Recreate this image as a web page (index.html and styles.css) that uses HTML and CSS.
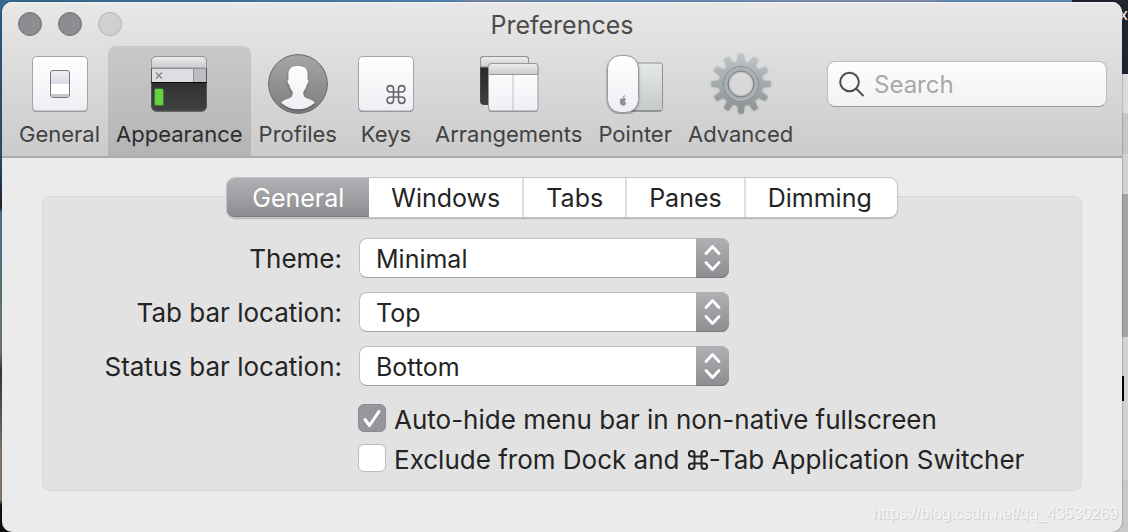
FILE: index.html
```html
<!DOCTYPE html>
<html lang="en">
<head>
<meta charset="utf-8">
<title>Preferences</title>
<link rel="stylesheet" href="styles.css">
</head>
<body>
<div class="backdrop" aria-hidden="true"><span class="backdrop-text">x</span><span class="backdrop-caret"></span></div>
<main class="window">
  <header class="header">
    <div class="titlebar">
      <div class="lights">
        <button class="light" aria-label="Close"></button>
        <button class="light" aria-label="Minimize"></button>
        <button class="light light-off" aria-label="Zoom" disabled></button>
      </div>
      <h1 class="title">Preferences</h1>
    </div>
    <div class="toolbar">
      <nav class="tools">
        <button class="tool">
          <svg class="icon" viewBox="0 0 60 60">
            <defs>
              <linearGradient id="plate" x2="0" y2="1"><stop stop-color="#fff"/><stop offset="1" stop-color="#eeeff4"/></linearGradient>
              <linearGradient id="rocker" x2="0" y2="1"><stop stop-color="#f0f1f4"/><stop offset=".48" stop-color="#d9dce4"/><stop offset=".5" stop-color="#fff"/><stop offset="1" stop-color="#fff"/></linearGradient>
              <linearGradient id="bar" x2="0" y2="1"><stop stop-color="#ededee"/><stop offset="1" stop-color="#cacbcd"/></linearGradient>
              <linearGradient id="dark" x2="0" y2="1"><stop stop-color="#222"/><stop offset="1" stop-color="#404040"/></linearGradient>
              <linearGradient id="disc" x2="0" y2="1"><stop stop-color="#a6a6a6"/><stop offset="1" stop-color="#7c7c7c"/></linearGradient>
              <linearGradient id="pad" x2="0" y2="1"><stop stop-color="#e4e8e9"/><stop offset="1" stop-color="#c4c9ca"/></linearGradient>
              <linearGradient id="steel" x2="0" y2="1"><stop stop-color="#bcc5c9"/><stop offset="1" stop-color="#8b8f91"/></linearGradient>
            </defs>
            <rect x="2.500" y="3.500" width="55" height="54.500" rx="4" fill="#8e8e90"/>
            <rect x="2.500" y="2.500" width="55" height="54.500" rx="4" fill="url(#plate)" stroke="#a3a3a6"/>
            <rect x="20.500" y="16.500" width="19" height="27" rx="2.500" fill="url(#rocker)" stroke="#77787c"/>
            <path d="M21 40h18v1.500q0 1.500-1.500 1.500h-15Q21 43 21 41.500z" fill="#c5c8c6"/>
          </svg>
          <span>General</span>
        </button>
        <button class="tool tool-active" aria-current="page">
          <svg class="icon" viewBox="0 0 60 60">
            <rect x="2.500" y="3" width="55" height="55" rx="5" fill="#777"/>
            <rect x="2.500" y="2.500" width="55" height="54.500" rx="5" fill="url(#dark)" stroke="#555"/>
            <path d="M2.500 14V7.500q0-5 5-5h45q5 0 5 5V14z" fill="url(#bar)" stroke="#96979a"/>
            <rect x="3" y="14" width="54" height="14" fill="#dddee1"/><rect x="44" y="14" width="13" height="14" fill="#bbbdc1"/>
            <path d="M3 14.500h54M44.500 15v13" stroke="#919296" fill="none"/>
            <path d="M7 18.500l6 6m0-6l-6 6" stroke="#828387" stroke-width="1.200"/>
            <path d="M2 28.500h56" stroke="#080808"/>
            <rect class="cursor" x="6" y="35" width="8" height="16" fill="#62d33f"/>
          </svg>
          <span>Appearance</span>
        </button>
        <button class="tool">
          <svg class="icon" viewBox="0 0 60 60">
            <circle cx="30" cy="30.500" r="29.500" fill="#ededed"/>
            <circle cx="30" cy="30" r="29.400" fill="url(#disc)" stroke="#686868"/>
            <path class="bust" d="M30 12c-7-.5-10 3.500-9.600 9.500v4c-1.400 0-.8 4.500 1 5.500.6 3.500 1.800 5 3.300 7-.2 3.500-.5 5-3 6-3.800 1.500-7 2.300-8.700 4.700C18 53 23.500 55.300 30 55.300S42 53 47 48.700c-1.700-2.400-5-3.200-8.700-4.700-2.500-1-2.800-2.500-3-6 1.500-2 2.700-3.500 3.300-7 1.800-1 2.400-5.500 1-5.500v-4C40 16 37.500 12.400 34 12.800 33 12 31.500 12 30 12z" fill="url(#plate)"/>
          </svg>
          <span>Profiles</span>
        </button>
        <button class="tool">
          <svg class="icon" viewBox="0 0 60 60">
            <rect x="2.500" y="3.500" width="55" height="54.500" rx="4" fill="#8e8e90"/>
            <rect x="2.500" y="2.500" width="55" height="54.500" rx="4" fill="url(#plate)" stroke="#a3a3a6"/>
            <path d="M37.500 38v-3.200a3.200 3.200 0 1 0-3.200 3.200h11.400a3.200 3.200 0 1 0-3.200-3.200v11.400a3.200 3.200 0 1 0 3.200-3.200H34.300a3.200 3.200 0 1 0 3.200 3.200z" fill="none" stroke="#66676a" stroke-width="1.600"/>
          </svg>
          <span>Keys</span>
        </button>
        <button class="tool">
          <svg class="icon" viewBox="0 0 60 60">
            <rect x="1.500" y="2.500" width="48" height="48" rx="3" fill="url(#dark)" stroke="#444"/>
            <path d="M1.500 13V5.500q0-3 3-3h42q3 0 3 3V13z" fill="url(#bar)" stroke="#919295"/>
            <rect x="9.500" y="10.500" width="49.500" height="47.500" rx="3" fill="#929294"/>
            <rect x="9.500" y="9.500" width="49.500" height="47.500" rx="3" fill="url(#plate)" stroke="#98999c"/>
            <path d="M9.500 20.500v-8q0-3 3-3H56q3 0 3 3v8z" fill="url(#bar)" stroke="#98999c"/>
            <path d="M34 21v36" stroke="#bfc0c4"/>
          </svg>
          <span>Arrangements</span>
        </button>
        <button class="tool">
          <svg class="icon" viewBox="0 0 60 60">
            <rect x="20.500" y="9" width="37" height="48" rx="2.500" fill="url(#pad)" stroke="#8e9192"/>
            <path d="M24 57h32" stroke="#777"/>
            <rect class="mouse" x="2.500" y="1.500" width="31" height="57" rx="13" fill="url(#plate)" stroke="#9a9a9c"/>
            <path d="M18 44.500c1.200-.6 2.300-.5 3 .4-1.600 1.200-1.300 3.300.3 4-.7 2-1.700 3.300-3.300 2.500-1.600.8-3.200-.9-3.200-3.900 0-2.600 1.500-3.700 3.200-3zM17.800 44c0-1.500.9-2.600 2.100-3 .1 1.400-.7 2.700-2.100 3z" fill="#929295"/>
          </svg>
          <span>Pointer</span>
        </button>
        <button class="tool">
          <svg class="icon gear" viewBox="0 0 60 60">
            <defs>
              <path id="tooth" d="M26.500 10L27.500.500h5l1 9.500v40l-1 9.500h-5l-1-9.500z" fill="#fff"/>
              <mask id="gearmask">
                <use href="#tooth"/><use href="#tooth" transform="rotate(30 30 30)"/><use href="#tooth" transform="rotate(60 30 30)"/><use href="#tooth" transform="rotate(90 30 30)"/><use href="#tooth" transform="rotate(120 30 30)"/><use href="#tooth" transform="rotate(150 30 30)"/>
                <circle cx="30" cy="30" r="22" fill="#fff"/><circle cx="30" cy="30" r="12.500" fill="#000"/>
              </mask>
            </defs>
            <rect width="60" height="60" fill="url(#steel)" mask="url(#gearmask)"/>
            <circle cx="30" cy="30" r="17.500" fill="none" stroke="#858b8e"/>
            <circle cx="30" cy="30" r="15.200" fill="none" stroke="#aab1b4" stroke-width="3.500"/>
            <circle cx="30" cy="30" r="13" fill="none" stroke="#7b8082"/>
          </svg>
          <span>Advanced</span>
        </button>
      </nav>
      <label class="search">
        <svg class="glass" viewBox="0 0 26 26"><circle cx="10.500" cy="11" r="9.300"/><path d="M17 17.500L24.500 25"/></svg>
        <input class="search-input" type="search" placeholder="Search" aria-label="Search">
      </label>
    </div>
  </header>
  <section class="content">
    <div class="panel">
      <div class="tabs" role="tablist">
        <button class="tab tab-active" role="tab" aria-selected="true">General</button>
        <button class="tab" role="tab">Windows</button>
        <button class="tab" role="tab">Tabs</button>
        <button class="tab" role="tab">Panes</button>
        <button class="tab" role="tab">Dimming</button>
      </div>
      <form class="form">
        <label class="label" for="theme">Theme:</label>
        <div class="popup">
          <select id="theme" class="select"><option>Minimal</option></select>
          <svg class="arrows" viewBox="0 0 33 40"><path d="M10 15.500l6.500-7 6.500 7M10 24.500l6.500 7 6.500-7"/></svg>
        </div>
        <label class="label" for="tabbar">Tab bar location:</label>
        <div class="popup">
          <select id="tabbar" class="select"><option>Top</option></select>
          <svg class="arrows" viewBox="0 0 33 40"><path d="M10 15.500l6.500-7 6.500 7M10 24.500l6.500 7 6.500-7"/></svg>
        </div>
        <label class="label" for="statusbar">Status bar location:</label>
        <div class="popup">
          <select id="statusbar" class="select"><option>Bottom</option></select>
          <svg class="arrows" viewBox="0 0 33 40"><path d="M10 15.500l6.500-7 6.500 7M10 24.500l6.500 7 6.500-7"/></svg>
        </div>
        <div class="checks">
          <label class="check"><span class="box"><input class="tick" type="checkbox" checked><svg class="mark" viewBox="0 0 28 28"><path d="M7 15.500l4.500 6L21 7.500"/></svg></span>Auto-hide menu bar in non-native fullscreen</label>
          <label class="check"><span class="box"><input class="tick" type="checkbox"></span><span>Exclude from Dock and <svg class="cmd" viewBox="0 0 22 22" role="img" aria-label="Command"><path d="M7.500 7.500V4.700a2.800 2.800 0 1 0-2.800 2.800h12.600a2.800 2.800 0 1 0-2.800-2.800v12.600a2.800 2.800 0 1 0 2.800-2.800H4.700a2.800 2.800 0 1 0 2.800 2.800z"/></svg>-Tab Application Switcher</span></label>
        </div>
      </form>
    </div>
  </section>
  <span class="watermark">https://blog.csdn.net/qq_43530269</span>
</main>
</body>
</html>
```
FILE: styles.css
```css
* { box-sizing: border-box; }

body {
  margin: 0;
  padding: 2px 6px 0 2px;
  min-height: 100vh;
  display: flex;
  overflow: hidden;
  font-family: Inter, Roboto, "Liberation Sans", sans-serif;
  color: #242424;
  background:
    linear-gradient(90deg, #35688f, #5286b4 40%, #7c8cae 42%, #6390bf 55%, #8b91b2 82%, #5f8cbb 84%, #5f8cbb 95%, #20242f 95%) 0 0 / 100% 12px no-repeat,
    linear-gradient(#2f6088, #2a4d70 30%, #20242e 39%, #53758c 40%, #6d7c79 66%, #3d3436 70%, #8a7a6b 85%, #8a7a6b 94%, #11120f 95%);
}

button, input, select { font: inherit; color: inherit; }
button { border: 0; padding: 0; background: none; }

.backdrop {
  position: absolute;
  top: 0;
  right: 0;
  width: 16px;
  height: 100%;
  overflow: hidden;
  background: linear-gradient(#20242f 74px, #dcdcdc 74px, #dcdcdc 113px, #c6c6c6 113px, #c6c6c6 154px, #d2d2d2 154px, #d2d2d2 194px, #a5a5a5 194px, #a5a5a5 337px, #d2d2d2 337px, #d2d2d2 480px, #c4c4c4 480px, #c9c9c9 482px);
}

.backdrop-text {
  position: absolute;
  top: 4px;
  right: 0;
  font-size: 16px;
  color: #fff;
}

.backdrop-caret {
  position: absolute;
  top: 376px;
  right: 4px;
  width: 4px;
  height: 25px;
  background: #000;
}

.window {
  position: relative;
  flex: 1;
  min-width: 0;
  display: flex;
  flex-direction: column;
  overflow: hidden;
  border-radius: 10px;
  background: #ebebeb;
  box-shadow: 0 0 2px #0008;
}

.header {
  border-bottom: 2px solid #adadad;
  background: linear-gradient(#e8e8e8, #cbcbcb);
  box-shadow: inset 0 1px #f6f6f6;
}

.titlebar {
  display: grid;
  grid-template-columns: 1fr auto 1fr;
  align-items: center;
  height: 44px;
  padding: 0 16px;
}

.lights { display: flex; gap: 16px; }

.light {
  width: 24px;
  height: 24px;
  border: 1px solid #747378;
  border-radius: 50%;
  background: #8d8c91;
}

.light-off { border-color: #b4b4b4; background: #d0d0d0; }

.title {
  margin: 0;
  padding-top: 2px;
  font-size: 25px;
  font-weight: 400;
  line-height: 30px;
  color: #4b4b4b;
}

.toolbar {
  display: flex;
  justify-content: space-between;
  padding: 0 15px 0 9px;
}

.tools { display: flex; }

.tool {
  display: flex;
  flex-direction: column;
  align-items: center;
  gap: 6px;
  min-width: 82px;
  height: 110px;
  padding: 8px 8px 0;
  border-radius: 8px 8px 0 0;
  font-size: 22px;
  line-height: 28px;
  color: #424242;
}

.tool-active {
  background: linear-gradient(#c9c9c9, #b4b4b4);
  color: #2c2c2c;
}

.icon { width: 60px; height: 60px; flex: none; }
.cursor { filter: drop-shadow(0 0 1px #62d33f); }
.bust { filter: drop-shadow(0 1px 1px #0006); }
.mouse { filter: drop-shadow(0 1px 1px #0006); }
.gear { filter: drop-shadow(0 0 1px #5558); }

.search {
  display: flex;
  align-items: center;
  gap: 9px;
  width: 280px;
  height: 46px;
  margin-top: 15px;
  padding: 0 11px;
  border: 1px solid #bdbdbd;
  border-bottom-color: #9c9c9c;
  border-radius: 8px;
  background: linear-gradient(#fdfdfd, #f2f2f2);
}

.glass { width: 26px; height: 26px; flex: none; fill: none; stroke: #4c4c4c; stroke-width: 2; }

.search-input {
  flex: 1;
  min-width: 0;
  padding: 2px 0 0;
  border: 0;
  outline: 0;
  background: none;
  font-size: 24px;
  line-height: 30px;
}

.search-input::placeholder { color: #a8a8a8; opacity: 1; }

.content { padding: 38px 40px 40px; }

.panel {
  display: flex;
  flex-direction: column;
  align-items: center;
  padding-bottom: 10px;
  border: 1px solid #d8d8d8;
  border-radius: 8px;
  background: #e2e2e2;
}

.tabs {
  display: flex;
  height: 39px;
  margin-top: -19px;
  border-radius: 8px;
  background: #fff;
  box-shadow: 0 0 0 1px #c4c4c4, 0 1px 1px 1px #0003;
}

.tab {
  padding: 0 22px;
  border-left: 2px solid #e0e0e0;
  font-size: 25px;
  line-height: 38px;
}

.tab:last-child { padding-right: 25px; }

.tab-active {
  padding: 0 25px;
  border-left: 0;
  border-radius: 8px 0 0 8px;
  background: linear-gradient(#b1b0b5, #8d8c91);
  box-shadow: inset 0 -1px #7c7b80;
  color: #fff;
}

.tab-active + .tab { border-left: 0; }

.form {
  align-self: stretch;
  display: grid;
  grid-template-columns: 299px minmax(0, 1fr);
  gap: 14px 17px;
  margin-top: 21px;
  font-size: 26px;
  line-height: 40px;
}

.label { height: 40px; line-height: 42px; text-align: right; white-space: nowrap; }

.popup { position: relative; max-width: 370px; height: 40px; }

.select {
  appearance: none;
  width: 100%;
  height: 40px;
  padding: 0 44px 0 16px;
  border: 1px solid #c0c0c0;
  border-bottom-color: #a2a2a2;
  border-radius: 8px;
  background: #fff;
  font-size: 25px;
}

.arrows {
  position: absolute;
  top: 0;
  right: 0;
  width: 33px;
  height: 40px;
  border-radius: 0 8px 8px 0;
  background: linear-gradient(#b1b0b5, #8d8c91);
  box-shadow: inset 0 -1px #7c7b80;
  fill: none;
  stroke: #fff;
  stroke-width: 2.8;
  stroke-linecap: round;
  stroke-linejoin: round;
  pointer-events: none;
}

.checks { grid-column: 2; display: grid; gap: 0; }

.check {
  display: flex;
  align-items: center;
  gap: 8px;
  height: 40px;
  white-space: nowrap;
}

.box { position: relative; display: flex; width: 28px; height: 28px; flex: none; margin: 0 0 4px -1px; }

.tick {
  appearance: none;
  width: 28px;
  height: 28px;
  margin: 0;
  border: 1px solid #bcbcbc;
  border-radius: 6px;
  background: #fff;
}

.tick:checked { border-color: #8b8990; background: #98969c; }

.mark {
  position: absolute;
  inset: 0;
  fill: none;
  stroke: #fff;
  stroke-width: 3;
  stroke-linecap: round;
  stroke-linejoin: round;
  pointer-events: none;
}

.cmd { width: 22px; height: 22px; vertical-align: -2px; fill: none; stroke: #242424; stroke-width: 2; }

.watermark {
  position: absolute;
  right: 4px;
  bottom: 8px;
  font-family: "Liberation Sans", sans-serif;
  font-size: 16px;
  line-height: 20px;
  color: #f5f5f5;
  text-shadow: 1px 1px #cfcfcf;
}
```
